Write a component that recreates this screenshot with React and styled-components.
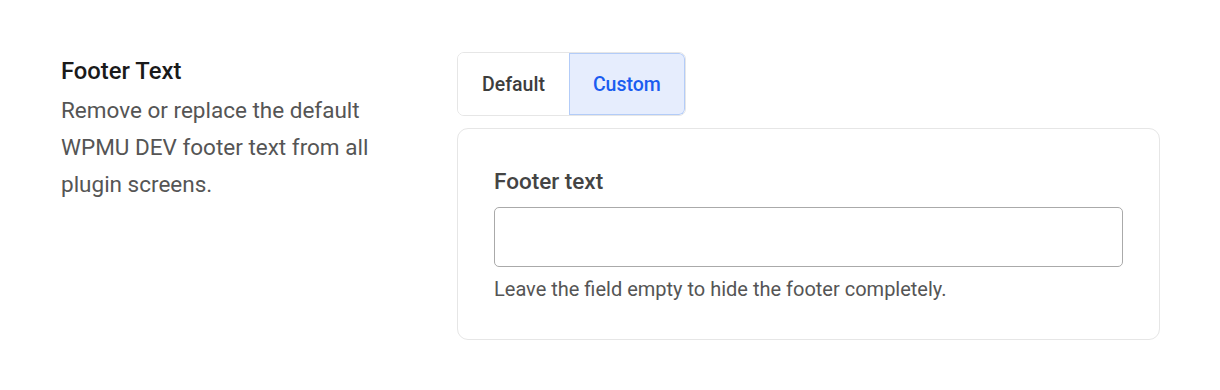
import React, { useState } from 'react'
import styled, { createGlobalStyle } from 'styled-components'

const GlobalStyle = createGlobalStyle`
    body {
        margin: 0;
        background: #ffffff;
        font-family: Roboto, "Liberation Sans", sans-serif;
    }
`

const Page = styled.div`
    display: flex;
    padding: 52px 60px 0 61px;
`

const Side = styled.div`
    width: 396px;
    flex-shrink: 0;
    padding-top: 6px;
`

const Title = styled.h3`
    margin: 0;
    font-size: 23.8px;
    font-weight: 500;
    line-height: 26px;
    color: #1a1a1a;
`

const Description = styled.p`
    margin: 8px 0 0;
    font-size: 22.5px;
    line-height: 37px;
    color: #555555;
    width: 330px;
`

const Main = styled.div`
    flex: 1;
    max-width: 703px;
`

const Tabs = styled.div`
    display: inline-flex;
    border: 1px solid #e6e6e6;
    border-radius: 7px;
    overflow: hidden;
`

const Tab = styled.button`
    height: 62px;
    padding: 0 ${(p) => p.$pad}px;
    border: none;
    background: ${(p) => (p.$active ? '#e6edfd' : '#ffffff')};
    color: ${(p) => (p.$active ? '#1a5cf0' : '#3d3d3d')};
    box-shadow: ${(p) => (p.$active ? 'inset 0 0 0 1px #b3ccf8' : 'none')};
    font-family: Roboto, "Liberation Sans", sans-serif;
    font-size: 19.5px;
    font-weight: 500;
    cursor: pointer;

    &:last-child {
        border-radius: 0 6px 6px 0;
    }
`

const Card = styled.div`
    margin-top: 12px;
    border: 1px solid #e6e6e6;
    border-radius: 11px;
    padding: 38px 36px 38px;
`

const Label = styled.label`
    display: block;
    font-size: 22.5px;
    font-weight: 500;
    line-height: 28px;
    color: #444444;
`

const Input = styled.input`
    display: block;
    box-sizing: border-box;
    width: 100%;
    height: 60px;
    margin-top: 12px;
    border: 1px solid #aaaaaa;
    border-radius: 5px;
    padding: 0 16px;
    font-family: Roboto, "Liberation Sans", sans-serif;
    font-size: 18px;
    outline: none;
`

const Help = styled.p`
    margin: 10px 0 0;
    font-size: 20px;
    line-height: 24px;
    color: #555555;
`

export default function App() {
    const [mode, setMode] = useState('custom')
    return (
        <>
            <GlobalStyle />
            <Page>
                <Side>
                    <Title>Footer Text</Title>
                    <Description>
                        Remove or replace the default WPMU DEV footer text from all plugin screens.
                    </Description>
                </Side>
                <Main>
                    <Tabs>
                        <Tab $pad={24} $active={mode === 'default'} onClick={() => setMode('default')}>
                            Default
                        </Tab>
                        <Tab $pad={24} $active={mode === 'custom'} onClick={() => setMode('custom')}>
                            Custom
                        </Tab>
                    </Tabs>
                    <Card>
                        <Label htmlFor="footer-text">Footer text</Label>
                        <Input id="footer-text" type="text" />
                        <Help>Leave the field empty to hide the footer completely.</Help>
                    </Card>
                </Main>
            </Page>
        </>
    )
}
